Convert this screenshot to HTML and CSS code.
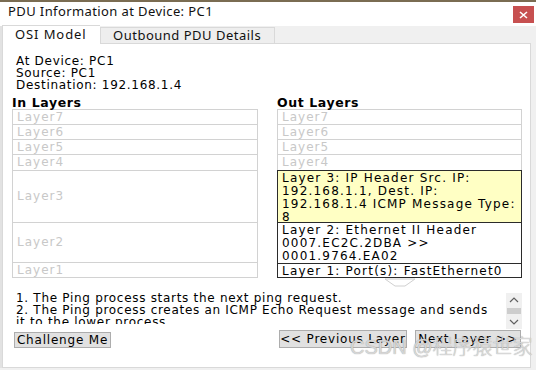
FILE: index.html
```html
<!DOCTYPE html>
<html>
<head>
    <title>PDU Information at Device: PC1</title>
    <link rel="stylesheet" href="styles.css">
</head>
<body>
    <div class="desktop-strip"></div>
    <div class="window">
        <div class="titlebar">
            <span class="title">PDU Information at Device: PC1</span>
            <span class="close-btn">
                <svg width="9" height="8" viewBox="0 0 9 8"><path d="M1 1 L8 7 M8 1 L1 7" stroke="#fff" stroke-width="1.6"/></svg>
            </span>
        </div>

        <div class="tabs">
            <div class="tab active">OSI Model</div>
            <div class="tab">Outbound PDU Details</div>
        </div>

        <div class="panel">
            <div class="info">
                <div>At Device: PC1</div>
                <div>Source: PC1</div>
                <div>Destination: 192.168.1.4</div>
            </div>

            <div class="layers">
                <div class="column">
                    <h2>In Layers</h2>
                    <div class="layer h15">Layer7</div>
                    <div class="layer h15">Layer6</div>
                    <div class="layer h15">Layer5</div>
                    <div class="layer h16">Layer4</div>
                    <div class="layer h52">Layer3</div>
                    <div class="layer h40">Layer2</div>
                    <div class="layer h15">Layer1</div>
                </div>
                <div class="column">
                    <h2>Out Layers</h2>
                    <div class="layer h15">Layer7</div>
                    <div class="layer h15">Layer6</div>
                    <div class="layer h15">Layer5</div>
                    <div class="layer h16">Layer4</div>
                    <div class="layer h52 active current">Layer 3: IP Header Src. IP:<br>192.168.1.1, Dest. IP:<br>192.168.1.4 ICMP Message Type:<br>8</div>
                    <div class="layer h41 active">Layer 2: Ethernet II Header<br>0007.EC2C.2DBA &gt;&gt;<br>0001.9764.EA02</div>
                    <div class="layer h14 active">Layer 1: Port(s): FastEthernet0</div>
                    <div class="pointer">
                        <svg width="32" height="9" viewBox="0 0 32 9"><path d="M1 1 H31 L21 8 H11 Z" fill="#fff" stroke="#d0d0d0"/></svg>
                    </div>
                </div>
            </div>

            <div class="description">
                <div class="desc-text">
                    1. The Ping process starts the next ping request.<br>
                    2. The Ping process creates an ICMP Echo Request message and sends<br>
                    it to the lower process.
                </div>
                <div class="scrollbar">
                    <svg width="16" height="36" viewBox="0 0 16 36">
                        <path d="M4 9 L8 5 L12 9" fill="none" stroke="#606060" stroke-width="1.2"/>
                        <rect x="1" y="15" width="14" height="6" fill="#cdcdcd"/>
                        <path d="M4 27 L8 31 L12 27" fill="none" stroke="#606060" stroke-width="1.2"/>
                    </svg>
                </div>
            </div>

            <div class="buttons">
                <button class="btn challenge">Challenge Me</button>
                <div class="nav-buttons">
                    <button class="btn prev">&lt;&lt; Previous Layer</button>
                    <button class="btn next">Next Layer &gt;&gt;</button>
                </div>
            </div>
        </div>
    </div>
    <div class="watermark">CSDN @程序猿世家</div>
</body>
</html>
```

FILE: styles.css
```css
body {
    margin: 0;
    padding: 0;
    background-color: #f0f0f0;
    font-family: "DejaVu Sans", Verdana, sans-serif;
    width: 536px;
    height: 370px;
    overflow: hidden;
    position: relative;
}

.desktop-strip {
    height: 2px;
    background-color: #7a6c52;
}

.window {
    background-color: #f0f0f0;
    border-left: 2px solid #e2e2e2;
}

.titlebar {
    height: 24px;
    background-color: #fff;
    display: flex;
    align-items: flex-start;
    justify-content: space-between;
    margin-left: -2px;
}

.title {
    font-family: "Noto Sans", "Open Sans", sans-serif;
    font-size: 13px;
    letter-spacing: 0.4px;
    line-height: 16px;
    margin: 1px 0 0 8px;
    color: #111;
}

.close-btn {
    width: 21px;
    height: 17px;
    margin: 4px 2px 0 0;
    background-color: #c75050;
    display: flex;
    align-items: center;
    justify-content: center;
}

.tabs {
    height: 17px;
    display: flex;
    align-items: flex-end;
    font-family: "Noto Sans", "Open Sans", sans-serif;
    font-size: 13px;
    letter-spacing: 0.5px;
    color: #111;
}

.tab {
    height: 15px;
    line-height: 15px;
    padding: 0 0 0 12px;
    width: 161px;
    background-color: #eeeeee;
    border: 1px solid #d9d9d9;
    border-bottom: none;
}

.tab.active {
    height: 18px;
    line-height: 17px;
    width: 85px;
    background-color: #fff;
    border-right: none;
    margin-bottom: -1px;
    position: relative;
    z-index: 1;
    letter-spacing: 0.9px;
}

.panel {
    background-color: #fff;
    border: 1px solid #d9d9d9;
    box-sizing: border-box;
    width: 529px;
    height: 325px;
    font-size: 12px;
    letter-spacing: 0.7px;
    color: #000;
}

.info {
    padding: 11px 0 0 13px;
    line-height: 12px;
}

.layers {
    display: grid;
    grid-template-columns: 246px 245px;
    column-gap: 19px;
    padding-left: 9px;
    margin-top: 5px;
}

.column h2 {
    margin: 0;
    font-size: 12.5px;
    letter-spacing: 0.6px;
    font-weight: bold;
    line-height: 13px;
}

.layer {
    box-sizing: border-box;
    border: 1px solid #d2d2d2;
    color: #c8c8c8;
    padding: 0 4px;
    display: flex;
    align-items: center;
    line-height: 13px;
    letter-spacing: 1px;
    white-space: nowrap;
    margin-bottom: -1px;
}

.layer.active {
    border-color: #2b2b2b;
    color: #000;
    align-items: flex-start;
    padding-top: 1px;
    letter-spacing: 1.2px;
    position: relative;
}

.layer.current {
    background-color: #ffffc4;
}

.h14 { height: 15px; }
.h15 { height: 16px; }
.h16 { height: 17px; }
.h40 { height: 41px; }
.h41 { height: 42px; }
.h52 { height: 53px; }

.pointer {
    display: flex;
    justify-content: center;
    height: 9px;
    margin-top: 1px;
}

.description {
    display: flex;
    margin: 3px 0 0 9px;
    width: 510px;
}

.desc-text {
    flex: 1;
    height: 32px;
    overflow: hidden;
    padding: 2px 0 0 4px;
    line-height: 12px;
    white-space: nowrap;
    letter-spacing: 0.7px;
}

.scrollbar {
    width: 16px;
    height: 36px;
    margin-top: 3px;
    background-color: #f0f0f0;
}

.buttons {
    display: flex;
    justify-content: space-between;
    align-items: flex-end;
    padding: 1px 8px 0 11px;
    width: 507px;
}

.nav-buttons {
    display: flex;
    gap: 8px;
}

.btn {
    font-family: "DejaVu Sans", Verdana, sans-serif;
    font-size: 12px;
    letter-spacing: 0.8px;
    background-color: #e1e1e1;
    border: 1px solid #adadad;
    padding: 0;
    height: 18px;
    line-height: 15px;
    color: #000;
    margin: 0;
    white-space: nowrap;
}

.btn.challenge {
    height: 16px;
    line-height: 13px;
    width: 97px;
}

.btn.prev {
    width: 128px;
}

.btn.next {
    width: 106px;
}

.watermark {
    position: absolute;
    left: 350px;
    top: 334px;
    white-space: nowrap;
    font-family: "Liberation Sans", "Noto Sans CJK SC", sans-serif;
    font-size: 20px;
    font-weight: 300;
    line-height: 26px;
    color: rgba(232, 232, 232, 0.8);
    text-shadow: 0 0 1px #888;
}
```
